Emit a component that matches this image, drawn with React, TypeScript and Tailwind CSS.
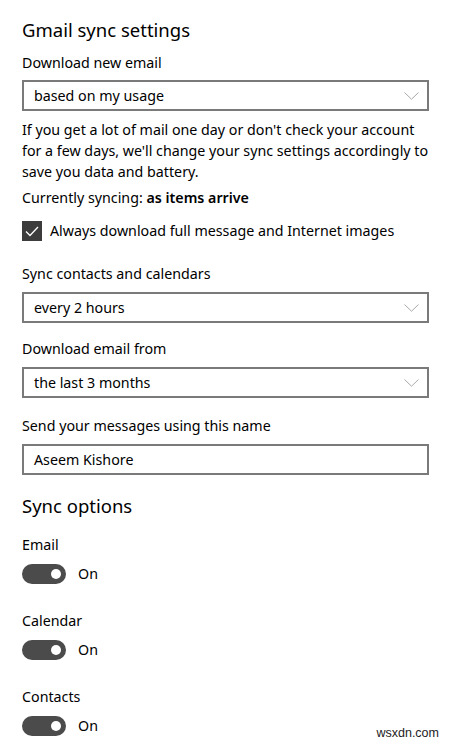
import React from "react";

const Chevron = () => (
  <svg width="15" height="8" viewBox="0 0 15 8" className="shrink-0">
    <polyline points="0.5,0.5 7.5,7.2 14.5,0.5" fill="none" stroke="#a8a8a8" strokeWidth="1" />
  </svg>
);

const Select = ({ value, mt }: { value: string; mt: string }) => (
  <div className={`${mt} flex h-[31px] items-center justify-between border-2 border-[#7a7a7a] pl-[10px] pr-[8px]`}>
    <span className="leading-[20px]">{value}</span>
    <Chevron />
  </div>
);

const Toggle = ({ mt }: { mt: string }) => (
  <div className={`${mt} flex h-[20px] items-center gap-[12px]`}>
    <div className="flex h-[20px] w-[44px] items-center justify-end rounded-full bg-[#4b4b4b] pr-[5px]">
      <div className="h-[10px] w-[10px] rounded-full bg-white" />
    </div>
    <span className="leading-[20px]">On</span>
  </div>
);

export default function App() {
  return (
    <div className="relative h-[743px] w-[451px] overflow-hidden bg-white px-[22px] pt-[16px] text-[14.25px] text-black [font-family:'Noto_Sans',sans-serif]">
      <div className="text-[18.5px] leading-[28px]">Gmail sync settings</div>
      <div className="mt-[9px] leading-[20px]">Download new email</div>
      <Select value="based on my usage" mt="mt-[7px]" />
      <p className="mt-[8px] leading-[21px]">
        If you get a lot of mail one day or don't check your account for a few days, we'll change your sync settings accordingly to save you data and battery.
      </p>
      <div className="mt-[6px] leading-[20px]">
        Currently syncing: <span className="font-semibold">as items arrive</span>
      </div>
      <div className="mt-[13px] flex h-[20px] items-center gap-[8px]">
        <div className="flex h-[20px] w-[20px] items-center justify-center bg-[#3c3c3c]">
          <svg width="14" height="11" viewBox="0 0 14 11">
            <polyline points="1,5.5 5,9.5 13,1" fill="none" stroke="white" strokeWidth="1.3" />
          </svg>
        </div>
        <span className="leading-[20px]">Always download full message and Internet images</span>
      </div>
      <div className="mt-[23px] leading-[20px]">Sync contacts and calendars</div>
      <Select value="every 2 hours" mt="mt-[8px]" />
      <div className="mt-[16px] leading-[20px]">Download email from</div>
      <Select value="the last 3 months" mt="mt-[8px]" />
      <div className="mt-[18px] leading-[20px]">Send your messages using this name</div>
      <div className="mt-[8px] flex h-[31px] items-center border-2 border-[#7a7a7a] pl-[10px]">
        <span className="leading-[20px]">Aseem Kishore</span>
      </div>
      <div className="mt-[17px] text-[18.5px] leading-[28px]">Sync options</div>
      <div className="mt-[15px] leading-[20px]">Email</div>
      <Toggle mt="mt-[9px]" />
      <div className="mt-[27px] leading-[20px]">Calendar</div>
      <Toggle mt="mt-[9px]" />
      <div className="mt-[27px] leading-[20px]">Contacts</div>
      <Toggle mt="mt-[9px]" />
      <div className="absolute bottom-[1px] right-[12px] text-[12.5px] leading-[18px] text-[#222] [font-family:'Liberation_Sans',sans-serif]">
        wsxdn.com
      </div>
    </div>
  );
}
